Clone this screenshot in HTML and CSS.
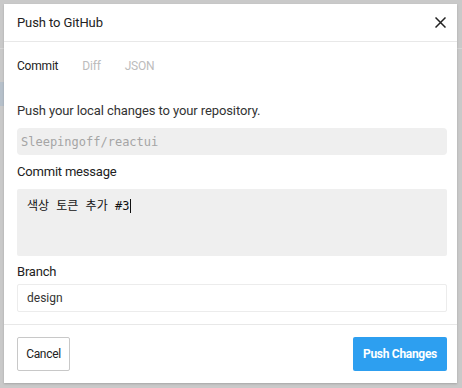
FILE: index.html
```html
<!DOCTYPE html>
<html lang="en">
<head>
  <meta charset="UTF-8">
  <meta name="viewport" content="width=device-width, initial-scale=1.0">
  <title>Push to GitHub</title>
  <link rel="stylesheet" href="styles.css">
</head>
<body>

  <!-- page behind the overlay -->
  <div class="backdrop">
    <div class="backdrop-bar"></div>
    <div class="backdrop-row"></div>
  </div>

  <div class="modal">
    <div class="modal-header">
      <h2>Push to GitHub</h2>
      <button class="close-btn" aria-label="Close">
        <svg width="11" height="11" viewBox="0 0 11 11">
          <path d="M0.5 0.5 L10.5 10.5 M10.5 0.5 L0.5 10.5" stroke="#222" stroke-width="1.5" fill="none"/>
        </svg>
      </button>
    </div>

    <div class="modal-body">
      <div class="tabs">
        <span class="tab active">Commit</span>
        <span class="tab">Diff</span>
        <span class="tab">JSON</span>
      </div>

      <p class="desc">Push your local changes to your repository.</p>
      <div class="repo-field">Sleepingoff/reactui</div>

      <label class="field-label">Commit message</label>
      <div class="message-field">색상 토큰 추가 #3<span class="caret"></span></div>

      <label class="field-label branch-label">Branch</label>
      <div class="branch-field">design</div>
    </div>

    <div class="modal-footer">
      <button class="btn-cancel">Cancel</button>
      <button class="btn-push">Push Changes</button>
    </div>
  </div>

</body>
</html>
```

FILE: styles.css
```css
/* Page + overlay */
body {
  margin: 0;
  width: 462px;
  height: 388px;
  overflow: hidden;
  background: #c9c9c9;
  font-family: Roboto, "Liberation Sans", sans-serif;
  color: #222;
}

.backdrop {
  height: 100%;
}

.backdrop-bar {
  height: 48px;
  border-bottom: 1px solid #d6d6d6;
}

.backdrop-row {
  margin-top: 33px;
  width: 4px;
  height: 24px;
  background: #b6c0ca;
}

/* Modal */
.modal {
  position: absolute;
  left: 4px;
  top: 4px;
  width: 453px;
  height: 379px;
  background: #fff;
  box-shadow: 0 1px 2px rgba(0, 0, 0, 0.18);
  display: flex;
  flex-direction: column;
}

.modal-header {
  height: 37px;
  padding: 0 10px 0 13px;
  display: flex;
  align-items: center;
  justify-content: space-between;
  border-bottom: 1px solid #e8e8e8;
}

.modal-header h2 {
  margin: 0;
  font-size: 13px;
  font-weight: 400;
  letter-spacing: -0.1px;
  color: #222;
}

.close-btn {
  border: none;
  background: none;
  padding: 0;
  margin-right: 1px;
  width: 11px;
  height: 11px;
  display: flex;
}

.modal-body {
  flex: 1;
  padding: 12px 10px 0 13px;
}

.tabs {
  display: flex;
  gap: 24px;
  height: 24px;
  align-items: center;
  font-size: 12px;
  letter-spacing: -0.2px;
}

.tab {
  color: #bcbcbc;
}

.tab.active {
  color: #222;
}

.desc {
  margin: 25px 0 0;
  font-size: 13px;
  line-height: 16px;
  letter-spacing: -0.1px;
  color: #333;
}

.repo-field {
  margin-top: 9px;
  height: 27px;
  padding-left: 4px;
  display: flex;
  align-items: center;
  background: #efefef;
  border-radius: 4px;
  font-family: "DejaVu Sans Mono", "Noto Sans CJK KR", monospace;
  font-size: 12px;
  color: #a5a5a5;
}

.field-label {
  display: block;
  margin-top: 9px;
  font-size: 13px;
  line-height: 16px;
  letter-spacing: -0.2px;
  color: #222;
}

.message-field {
  margin-top: 9px;
  height: 57px;
  padding: 10px 10px 0;
  background: #efefef;
  border-radius: 2px;
  font-family: "DejaVu Sans Mono", "Noto Sans CJK KR", monospace;
  font-size: 12px;
  line-height: 15px;
  color: #111;
}

.caret {
  display: inline-block;
  width: 1px;
  height: 14px;
  margin-left: 1px;
  background: #111;
  vertical-align: -3px;
}

.branch-label {
  margin-top: 8px;
}

.branch-field {
  margin-top: 4px;
  height: 26px;
  padding-left: 9px;
  display: flex;
  align-items: center;
  border: 1px solid #ececec;
  border-radius: 2px;
  font-size: 12px;
  color: #333;
}

/* Footer */
.modal-footer {
  height: 58px;
  padding: 0 10px 0 13px;
  border-top: 1px solid #e8e8e8;
  display: flex;
  align-items: center;
  justify-content: space-between;
}

.modal-footer button {
  height: 34px;
  font-family: Roboto, "Liberation Sans", sans-serif;
  font-size: 12px;
  letter-spacing: -0.3px;
  border-radius: 2px;
}

.btn-cancel {
  width: 53px;
  padding: 0;
  background: #fff;
  border: 1px solid #c8c8c8;
  color: #222;
}

.btn-push {
  width: 94px;
  padding: 0;
  background: #2d9ff0;
  border: none;
  color: #fff;
  font-weight: 700;
  border-radius: 3px;
}
```
